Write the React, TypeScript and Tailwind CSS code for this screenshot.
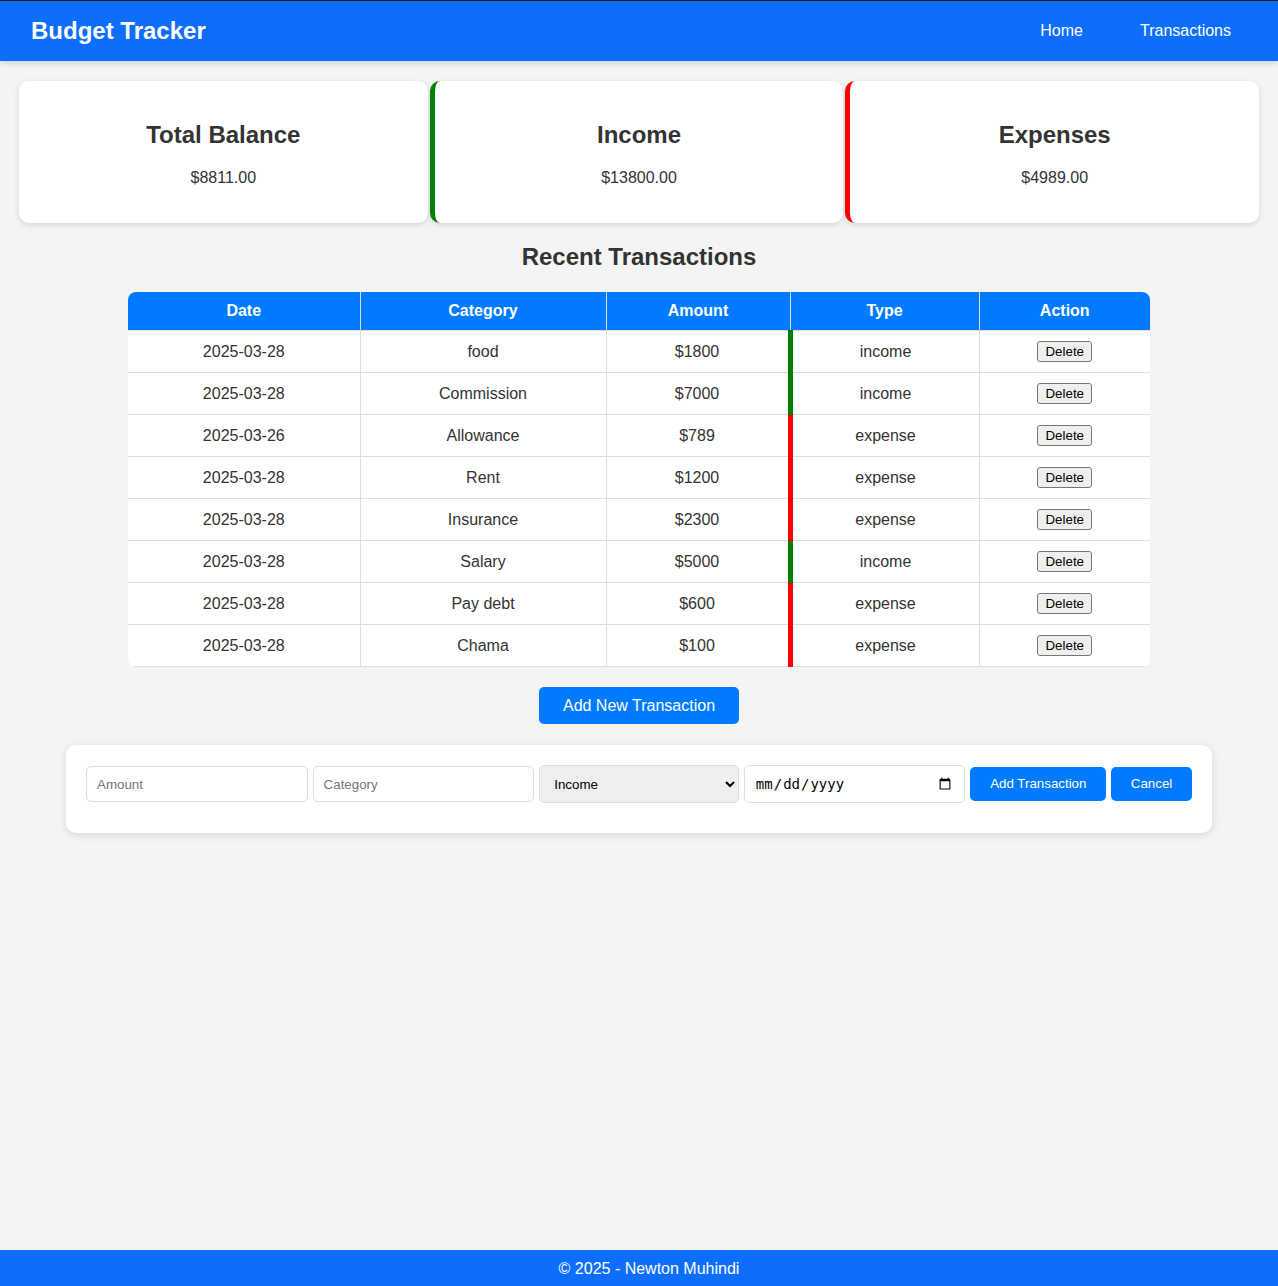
import { ChangeEvent, useState } from "react"

type Transaction = {
  date: string
  category: string
  amount: number
  type: "income" | "expense"
}

const initialTransactions: Transaction[] = [
  { date: "2025-03-28", category: "food", amount: 1800, type: "income" },
  { date: "2025-03-28", category: "Commission", amount: 7000, type: "income" },
  { date: "2025-03-26", category: "Allowance", amount: 789, type: "expense" },
  { date: "2025-03-28", category: "Rent", amount: 1200, type: "expense" },
  { date: "2025-03-28", category: "Insurance", amount: 2300, type: "expense" },
  { date: "2025-03-28", category: "Salary", amount: 5000, type: "income" },
  { date: "2025-03-28", category: "Pay debt", amount: 600, type: "expense" },
  { date: "2025-03-28", category: "Chama", amount: 100, type: "expense" },
]

function SummaryCard({ title, value, accent }: { title: string; value: string; accent?: "green" | "red" }) {
  return (
    <div
      className={`flex-1 bg-white rounded-[10px] shadow-[0_2px_6px_rgba(0,0,0,0.12)] px-5 py-5 text-center ${
        accent === "green" ? "border-l-[5px] border-[#008000]" : accent === "red" ? "border-l-[5px] border-[#ff0000]" : ""
      }`}
    >
      <h2 className="text-[24px] leading-[28px] font-bold my-5">{title}</h2>
      <p className="text-[16px] leading-[18px] my-4">{value}</p>
    </div>
  )
}

export default function App() {
  const [transactions, setTransactions] = useState(initialTransactions)
  const [showForm, setShowForm] = useState(true)
  const [form, setForm] = useState({ amount: "", category: "", type: "income", date: "" })

  // totals fixed to match the reference data
  const income = 13800
  const expenses = 4989
  const balance = income - expenses

  const update = (key: string) => (e: ChangeEvent<HTMLInputElement | HTMLSelectElement>) =>
    setForm({ ...form, [key]: e.target.value })

  const th = "bg-[#007bff] text-white font-bold border border-[#ddd] px-[10px] py-[10px] leading-[18px]"
  const td = "border border-[#ddd] px-[10px] py-[10px] leading-[18px] h-[42px]"
  const input =
    "h-[36px] border border-[#ddd] rounded-[5px] px-[10px] text-[13.33px] bg-white placeholder:text-[#757575] outline-none"

  return (
    <div className="min-h-screen flex flex-col bg-[#f4f4f4] text-[#333] font-['Liberation_Sans',Arial,sans-serif]">
      <header className="border-t border-[#1e1e1e] bg-[#0d6efd] h-[61px] flex items-center justify-between pl-[31px] pr-[32px] shadow-[0_2px_6px_rgba(0,0,0,0.15)]">
        <h1 className="text-white text-[24px] font-bold leading-[28px]">Budget Tracker</h1>
        <nav className="flex gap-[27px]">
          <a href="#" className="text-white text-[16px] px-[15px]">Home</a>
          <a href="#" className="text-white text-[16px] px-[15px]">Transactions</a>
        </nav>
      </header>

      <main className="flex-1 pt-[20px] pb-10">
        <div className="flex gap-[2px] px-[19px]">
          <SummaryCard title="Total Balance" value={`$${balance.toFixed(2)}`} />
          <SummaryCard title="Income" value={`$${income.toFixed(2)}`} accent="green" />
          <SummaryCard title="Expenses" value={`$${expenses.toFixed(2)}`} accent="red" />
        </div>

        <h2 className="text-center text-[24px] leading-[28px] font-bold mt-[20px] mb-[21px]">Recent Transactions</h2>

        <div className="w-[1022px] mx-auto rounded-[8px] overflow-hidden bg-white">
          <table className="w-full border-collapse text-center text-[16px]">
            <thead>
              <tr>
                <th className={`${th} w-[232px] border-l-0 border-t-0`}>Date</th>
                <th className={`${th} w-[246px] border-t-0`}>Category</th>
                <th className={`${th} w-[184px] border-t-0`}>Amount</th>
                <th className={`${th} w-[189px] border-t-0`}>Type</th>
                <th className={`${th} border-r-0 border-t-0`}>Action</th>
              </tr>
            </thead>
            <tbody>
              {transactions.map((t, i) => (
                <tr key={i}>
                  <td className={`${td} border-l-0`}>{t.date}</td>
                  <td className={td}>{t.category}</td>
                  <td className={td}>${t.amount}</td>
                  <td
                    className={`${td} border-l-[5px] ${
                      t.type === "income" ? "border-l-[#008000]" : "border-l-[#ff0000]"
                    }`}
                  >
                    {t.type}
                  </td>
                  <td className={`${td} border-r-0`}>
                    <button
                      onClick={() => setTransactions(transactions.filter((_, j) => j !== i))}
                      className="h-[21px] px-[7px] bg-[#efefef] border border-[#767676] rounded-[3px] text-[13.33px] leading-[15px] text-black align-middle"
                    >
                      Delete
                    </button>
                  </td>
                </tr>
              ))}
            </tbody>
          </table>
        </div>

        <div className="flex justify-center mt-[20px]">
          <button
            onClick={() => setShowForm(!showForm)}
            className="bg-[#007bff] text-white text-[16px] leading-[17px] px-[24px] py-[10px] rounded-[5px]"
          >
            Add New Transaction
          </button>
        </div>

        {showForm && (
          <div className="w-[1146px] mx-auto mt-[21px] bg-white rounded-[10px] shadow-[0_2px_8px_rgba(0,0,0,0.12)] px-5 pt-[20px] pb-[30px]">
            <div className="flex items-center gap-[5px] h-[38px]">
              <input className={`${input} w-[222px]`} placeholder="Amount" value={form.amount} onChange={update("amount")} />
              <input className={`${input} w-[222px]`} placeholder="Category" value={form.category} onChange={update("category")} />
              <select
                className="h-[38px] w-[200px] border border-[#ddd] rounded-[5px] pl-[10px] pr-[8px] bg-[#efefef] text-[13.33px] text-black"
                value={form.type}
                onChange={update("type")}
              >
                <option value="income">Income</option>
                <option value="expense">Expense</option>
              </select>
              <input
                type="date"
                className={`${input} w-[222px] h-[38px] text-[14px] text-black font-['DejaVu_Sans_Mono',monospace]`}
                value={form.date}
                onChange={update("date")}
              />
              <button className="h-[34px] w-[136px] bg-[#007bff] text-white text-[13.33px] rounded-[5px]">
                Add Transaction
              </button>
              <button
                onClick={() => setShowForm(false)}
                className="h-[34px] w-[81px] bg-[#007bff] text-white text-[13.33px] rounded-[5px]"
              >
                Cancel
              </button>
            </div>
          </div>
        )}
      </main>

      <footer className="bg-[#0d6efd] text-white text-center text-[16px] leading-[18px] pt-[10px] pb-[8px] pl-[20px]">
        © 2025 - Newton Muhindi
      </footer>
    </div>
  )
}
